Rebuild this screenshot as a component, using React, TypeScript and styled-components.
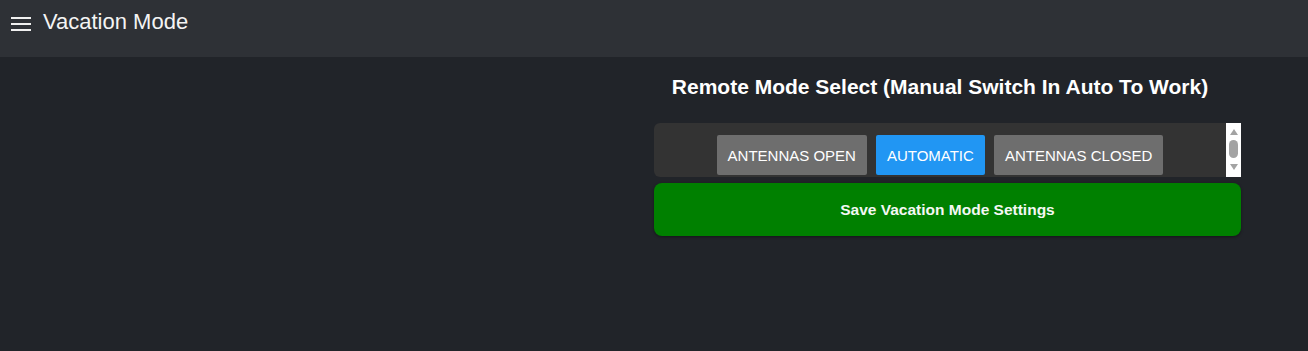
import React from "react";
import styled, { createGlobalStyle } from "styled-components";

const Global = createGlobalStyle`
  html, body { margin: 0; padding: 0; background: #212429; }
  body { font-family: "Liberation Sans", Arial, sans-serif; color: #fff; }
`;

const Page = styled.div`
  width: 1308px;
  height: 351px;
  background: #212429;
  display: flex;
  flex-direction: column;
`;

const Header = styled.header`
  height: 57px;
  background: #2e3136;
  display: flex;
  align-items: flex-start;
  padding: 10px 0 0 11px;
  box-sizing: border-box;
  gap: 12px;
`;

const MenuIcon = styled.svg`
  width: 20px;
  height: 16px;
  margin-top: 6px;
  flex: none;
`;

const HeaderTitle = styled.h1`
  margin: 0;
  font-size: 22px;
  font-weight: 400;
  line-height: 24px;
  color: #f4f4f4;
`;

const Main = styled.main`
  display: grid;
  grid-template-columns: 654px 587px;
`;

const Column = styled.section`
  grid-column: 2;
  display: flex;
  flex-direction: column;
  padding-top: 18px;
`;

const SectionTitle = styled.h2`
  margin: 0 15px 0 0;
  font-size: 21px;
  font-weight: 700;
  line-height: 24px;
  text-align: center;
  color: #fff;
`;

const ModePanel = styled.div`
  margin-top: 24px;
  height: 54px;
  display: flex;
  background: #333333;
  border-radius: 6px 0 0 6px;
`;

const ModeViewport = styled.div`
  flex: 1;
  overflow: hidden;
`;

const ModeRow = styled.div`
  display: flex;
  justify-content: center;
  gap: 9px;
  padding: 12px 0 10px;
`;

const ModeButton = styled.button<{ $active?: boolean }>`
  height: 40px;
  padding: 0 11px;
  border: none;
  border-radius: 2px;
  background: ${(p) => (p.$active ? "#2196f3" : "#6e6e6e")};
  color: #fff;
  font-family: "Liberation Sans", Arial, sans-serif;
  font-size: 15px;
  cursor: pointer;
`;

const ScrollRail = styled.div`
  width: 15px;
  flex: none;
  background: #ffffff;
  display: flex;
  flex-direction: column;
  align-items: center;
  padding: 6px 0 7px;
  box-sizing: border-box;
`;

const RailArrow = styled.svg`
  width: 8px;
  height: 6px;
  display: block;
`;

const RailThumb = styled.div`
  width: 9px;
  height: 18px;
  margin: 5px 0 6px;
  border-radius: 5px;
  background: #a3a3a3;
`;

const SaveButton = styled.button`
  margin-top: 6px;
  height: 53px;
  border: none;
  border-radius: 8px;
  background: #008000;
  color: #f4f8f4;
  font-family: "Liberation Sans", Arial, sans-serif;
  font-weight: 700;
  font-size: 15.5px;
  box-shadow: 0 1px 3px rgba(0, 0, 0, 0.4);
  cursor: pointer;
`;

export default function App() {
  return (
    <>
      <Global />
      <Page>
        <Header>
          <MenuIcon viewBox="0 0 20 16">
            <rect x="0" y="1" width="20" height="2" fill="#f0f0f0" />
            <rect x="0" y="7" width="20" height="2" fill="#f0f0f0" />
            <rect x="0" y="13" width="20" height="2" fill="#f0f0f0" />
          </MenuIcon>
          <HeaderTitle>Vacation Mode</HeaderTitle>
        </Header>
        <Main>
          <Column>
            <SectionTitle>Remote Mode Select (Manual Switch In Auto To Work)</SectionTitle>
            <ModePanel>
              <ModeViewport>
                <ModeRow>
                  <ModeButton>ANTENNAS OPEN</ModeButton>
                  <ModeButton $active>AUTOMATIC</ModeButton>
                  <ModeButton>ANTENNAS CLOSED</ModeButton>
                </ModeRow>
              </ModeViewport>
              <ScrollRail>
                <RailArrow viewBox="0 0 8 6">
                  <polygon points="4,0 8,6 0,6" fill="#a3a3a3" />
                </RailArrow>
                <RailThumb />
                <RailArrow viewBox="0 0 8 6">
                  <polygon points="0,0 8,0 4,6" fill="#a3a3a3" />
                </RailArrow>
              </ScrollRail>
            </ModePanel>
            <SaveButton>Save Vacation Mode Settings</SaveButton>
          </Column>
        </Main>
      </Page>
    </>
  );
}
